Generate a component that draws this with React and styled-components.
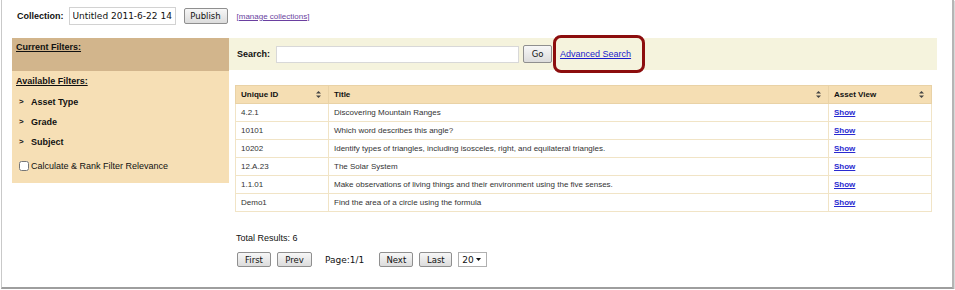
import React from 'react'
import styled, { createGlobalStyle } from 'styled-components'

const GlobalStyle = createGlobalStyle`
  html, body {
    margin: 0;
    padding: 0;
    background: #ffffff;
  }
  body {
    font-family: "Liberation Sans", Arial, sans-serif;
    color: #111;
  }
`

const rows = [
  { id: '4.2.1', title: 'Discovering Mountain Ranges' },
  { id: '10101', title: 'Which word describes this angle?' },
  { id: '10202', title: 'Identify types of triangles, including isosceles, right, and equilateral triangles.' },
  { id: '12.A.23', title: 'The Solar System' },
  { id: '1.1.01', title: 'Make observations of living things and their environment using the five senses.' },
  { id: 'Demo1', title: 'Find the area of a circle using the formula' },
]

const filters = ['Asset Type', 'Grade', 'Subject']

function SortIcon() {
  return (
    <svg width="5" height="7" viewBox="0 0 5 7">
      <path d="M2.5 0 L5 2.6 L0 2.6 Z" fill="#444" />
      <path d="M0 4.4 L5 4.4 L2.5 7 Z" fill="#444" />
    </svg>
  )
}

function App() {
  return (
    <>
      <GlobalStyle />
      <Frame>
        <CollectionBar>
          <Label>Collection:</Label>
          <CollectionInput defaultValue="Untitled 2011-6-22 14" />
          <GrayButton $h={16} $w={44}>Publish</GrayButton>
          <ManageLink href="#">[manage collections]</ManageLink>
        </CollectionBar>

        <Main>
          <Sidebar>
            <CurrentFilters>
              <SideHeading>Current Filters:</SideHeading>
            </CurrentFilters>
            <AvailableFilters>
              <SideHeading>Available Filters:</SideHeading>
              <FilterList>
                {filters.map((f) => (
                  <FilterItem key={f}>
                    <Caret>&gt;</Caret>
                    <span>{f}</span>
                  </FilterItem>
                ))}
              </FilterList>
              <CheckRow>
                <CheckBox type="checkbox" />
                <span>Calculate &amp; Rank Filter Relevance</span>
              </CheckRow>
            </AvailableFilters>
          </Sidebar>

          <Content>
            <SearchBar>
              <Label>Search:</Label>
              <SearchInput />
              <GrayButton $h={18} $w={29}>Go</GrayButton>
              <Highlight>
                <AdvancedLink href="#">Advanced Search</AdvancedLink>
              </Highlight>
            </SearchBar>

            <Results>
              <Table>
                <colgroup>
                  <col style={{ width: 93 }} />
                  <col style={{ width: 500 }} />
                  <col style={{ width: 103 }} />
                </colgroup>
                <thead>
                  <tr>
                    <Th>
                      <HeadCell>Unique ID<SortIcon /></HeadCell>
                    </Th>
                    <Th>
                      <HeadCell>Title<SortIcon /></HeadCell>
                    </Th>
                    <Th>
                      <HeadCell>Asset View<SortIcon /></HeadCell>
                    </Th>
                  </tr>
                </thead>
                <tbody>
                  {rows.map((r) => (
                    <tr key={r.id}>
                      <Td>{r.id}</Td>
                      <Td>{r.title}</Td>
                      <Td><ShowLink href="#">Show</ShowLink></Td>
                    </tr>
                  ))}
                </tbody>
              </Table>

              <Total>Total Results: 6</Total>

              <Pager>
                <GrayButton $h={15} $w={34}>First</GrayButton>
                <GrayButton $h={15} $w={35}>Prev</GrayButton>
                <PageInfo>Page:1/1</PageInfo>
                <GrayButton $h={15} $w={34}>Next</GrayButton>
                <GrayButton $h={15} $w={33}>Last</GrayButton>
                <PageSize>
                  <span>20</span>
                  <svg width="5" height="3" viewBox="0 0 5 3">
                    <path d="M0 0 L5 0 L2.5 3 Z" fill="#111" />
                  </svg>
                </PageSize>
              </Pager>
            </Results>
          </Content>
        </Main>
      </Frame>
    </>
  )
}

export default App

const Frame = styled.div`
  box-sizing: border-box;
  width: 953px;
  height: 289px;
  margin-left: 1px;
  border-left: 1px solid #c9c9c9;
  border-right: 2px solid #b5b5b5;
  border-bottom: 2px solid #9e9e9e;
  box-shadow: 1px 1px 1px rgba(0, 0, 0, 0.15);
  padding: 7px 0 0 10px;
`

const CollectionBar = styled.div`
  display: flex;
  align-items: center;
  height: 18px;
  padding-left: 5px;
`

const Label = styled.span`
  font-size: 9px;
  font-weight: bold;
  color: #111;
`

const CollectionInput = styled.input`
  box-sizing: border-box;
  width: 107px;
  height: 18px;
  margin-left: 5px;
  padding: 0 3px;
  border: 1px solid #d2d2d2;
  font-family: "DejaVu Sans", Tahoma, sans-serif;
  font-size: 9px;
  color: #111;
  outline: none;
`

const GrayButton = styled.button`
  box-sizing: border-box;
  width: ${(p) => p.$w}px;
  height: ${(p) => p.$h}px;
  margin-left: 8px;
  padding: 0;
  border: 1px solid #8f8f8f;
  border-radius: 2px;
  background: linear-gradient(#f7f7f7, #dcdcdc);
  font-family: "DejaVu Sans", Tahoma, sans-serif;
  font-size: 8.5px;
  color: #111;
  cursor: pointer;
`

const ManageLink = styled.a`
  margin-left: 9px;
  font-size: 8px;
  color: #6a3fa0;
`

const Main = styled.div`
  display: flex;
  margin-top: 13px;
`

const Sidebar = styled.div`
  width: 217px;
  flex-shrink: 0;
  align-self: flex-start;
`

const CurrentFilters = styled.div`
  box-sizing: border-box;
  height: 33px;
  padding: 4px 4px;
  background: #d2b58c;
`

const SideHeading = styled.div`
  font-size: 9px;
  font-weight: bold;
  text-decoration: underline;
  color: #111;
`

const AvailableFilters = styled.div`
  box-sizing: border-box;
  height: 112px;
  padding: 5px 4px 0;
  background: #f6dfb5;
`

const FilterList = styled.div`
  display: flex;
  flex-direction: column;
  gap: 9px;
  margin-top: 10px;
`

const FilterItem = styled.div`
  display: flex;
  align-items: center;
  height: 11px;
  padding-left: 3px;
  font-size: 9px;
  font-weight: bold;
  color: #111;
`

const Caret = styled.span`
  width: 12px;
  font-size: 8px;
`

const CheckRow = styled.label`
  display: flex;
  align-items: center;
  margin-top: 14px;
  padding-left: 3px;
  font-size: 9px;
  color: #111;
`

const CheckBox = styled.input`
  width: 10px;
  height: 10px;
  margin: 0 2px 0 0;
`

const Content = styled.div`
  width: 708px;
  flex-shrink: 0;
`

const SearchBar = styled.div`
  display: flex;
  align-items: center;
  height: 32px;
  padding-left: 8px;
  background: #f5f3dd;

  ${GrayButton} {
    margin-left: 4px;
  }
`

const SearchInput = styled.input`
  box-sizing: border-box;
  width: 243px;
  height: 17px;
  margin-left: 6px;
  border: 1px solid #d8d8d8;
  outline: none;
`

const Highlight = styled.span`
  position: relative;
  display: flex;
  align-items: center;
  height: 11px;
  margin-left: 8px;

  &::after {
    content: '';
    position: absolute;
    left: -7px;
    right: -14px;
    top: -14px;
    bottom: -13px;
    border: 3px solid #8c0d0d;
    border-radius: 8px;
    pointer-events: none;
  }
`

const AdvancedLink = styled.a`
  font-size: 9px;
  line-height: 11px;
  color: #1a1acc;
`

const Results = styled.div`
  padding: 15px 0 0 6px;
`

const Table = styled.table`
  width: 696px;
  border-collapse: collapse;
  table-layout: fixed;
  border: 1px solid #efdfbf;
`

const Th = styled.th`
  height: 17px;
  padding: 0 5px;
  background: #f5deb3;
  border: 1px solid #e9d2a6;
  text-align: left;
  font-size: 8px;
  font-weight: bold;
  color: #111;
`

const HeadCell = styled.div`
  display: flex;
  align-items: center;
  justify-content: space-between;
  padding-right: 2px;
`

const Td = styled.td`
  box-sizing: border-box;
  height: 18px;
  padding: 0 5px;
  border: 1px solid #f1e4c6;
  font-size: 8px;
  color: #333;
  white-space: nowrap;
`

const ShowLink = styled.a`
  font-weight: bold;
  color: #2a2ad0;
`

const Total = styled.div`
  margin-top: 21px;
  padding-left: 1px;
  font-size: 9px;
  color: #111;
`

const Pager = styled.div`
  display: flex;
  align-items: center;
  margin-top: 9px;

  ${GrayButton} {
    margin-left: 6px;
  }
  ${GrayButton}:first-child {
    margin-left: 2px;
  }
`

const PageInfo = styled.span`
  margin: 0 9px 0 13px;
  font-family: "DejaVu Sans", Tahoma, sans-serif;
  font-size: 9px;
  color: #111;
`

const PageSize = styled.div`
  box-sizing: border-box;
  display: flex;
  align-items: center;
  justify-content: space-between;
  width: 29px;
  height: 15px;
  margin-left: 6px;
  padding: 0 5px 0 3px;
  border: 1px solid #b0b0b0;
  font-family: "DejaVu Sans", Tahoma, sans-serif;
  font-size: 9px;
  color: #111;
`
